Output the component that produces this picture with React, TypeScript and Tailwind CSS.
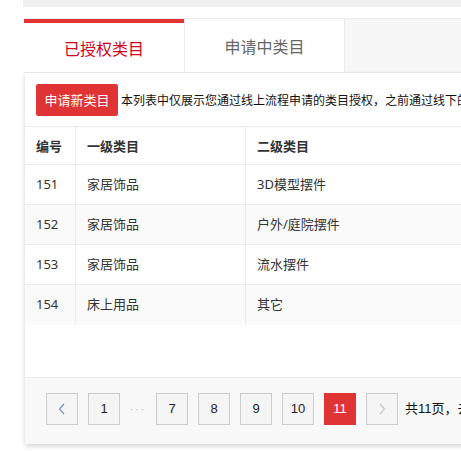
import React from "react";

const rows = [
  { id: "151", a: "家居饰品", b: "3D模型摆件", alt: false },
  { id: "152", a: "家居饰品", b: "户外/庭院摆件", alt: true },
  { id: "153", a: "家居饰品", b: "流水摆件", alt: false },
  { id: "154", a: "床上用品", b: "其它", alt: true },
];

function Chevron({ dir, color }: { dir: "left" | "right"; color: string }) {
  return (
    <svg width="8" height="12" viewBox="0 0 8 12" fill="none">
      {dir === "left" ? (
        <polyline points="6,1 1.5,6 6,11" stroke={color} strokeWidth="1.2" fill="none" />
      ) : (
        <polyline points="2,1 6.5,6 2,11" stroke={color} strokeWidth="1.2" fill="none" />
      )}
    </svg>
  );
}

export default function App() {
  const font = { fontFamily: '"Noto Sans", "Noto Sans CJK SC", sans-serif' };
  return (
    <div
      className="w-[461px] h-[451px] bg-white overflow-hidden relative"
      style={{ fontFamily: '"Noto Sans CJK SC", sans-serif' }}
    >
      <div className="ml-[23px] h-[7px] bg-[#f0f0f0]" />
      <div className="mt-[11px] ml-[24px] w-[600px] flex h-[55px] border-t border-[#ebebeb] border-b bg-[#f7f7f7]">
        <div className="w-[160px] bg-white flex flex-col">
          <div className="h-[4px] bg-[#e03333]" />
          <div className="flex-1 flex items-center justify-center text-[16px] text-[#d0021b]">
            已授权类目
          </div>
        </div>
        <div className="w-[161px] bg-white border-l border-r border-[#ebebeb] flex items-center justify-center text-[16px] text-[#666]">
          申请中类目
        </div>
      </div>
      <div className="ml-[25px] w-[600px] h-[371px] bg-white shadow-[0_2px_5px_rgba(0,0,0,0.18)] flex flex-col">
        <div className="flex items-center pl-[11px] pt-[11px] pb-[10px] border-b border-[#ebebeb] whitespace-nowrap">
          <div className="h-[32px] w-[82px] bg-[#e03333] rounded-[2px] text-white text-[13px] flex items-center justify-center">
            申请新类目
          </div>
          <div className="ml-[3px] text-[12px] text-[#111]">
            本列表中仅展示您通过线上流程申请的类目授权，之前通过线下的申请记录请联系小二查询
          </div>
        </div>
        <div className="flex flex-col text-[13px] text-[#333]" style={font}>
          <div className="flex h-[38px] border-b border-[#ebebeb] font-bold text-[#333]" style={{ fontFamily: '"Noto Sans CJK SC", sans-serif' }}>
            <div className="w-[51px] pl-[11px] flex items-center border-r border-[#ebebeb]">编号</div>
            <div className="w-[170px] pl-[11px] flex items-center border-r border-[#ebebeb]">一级类目</div>
            <div className="flex-1 pl-[11px] flex items-center">二级类目</div>
          </div>
          {rows.map((r, i) => (
            <div
              key={r.id}
              className={`flex h-[40px] ${i < rows.length - 1 ? "border-b border-[#ebebeb]" : ""} ${r.alt ? "bg-[#fafafa]" : "bg-white"}`}
            >
              <div className="w-[51px] pl-[11px] flex items-center border-r border-[#ebebeb]">{r.id}</div>
              <div className="w-[170px] pl-[11px] flex items-center border-r border-[#ebebeb]">{r.a}</div>
              <div className="flex-1 pl-[11px] flex items-center">{r.b}</div>
            </div>
          ))}
        </div>
        <div className="flex-1" />
        <div
          className="h-[67px] bg-[#f8f8f8] border-t border-[#ebebeb] flex items-start pt-[15px] pl-[21px] gap-[10px] whitespace-nowrap text-[13px] text-[#222]"
          style={{ fontFamily: '"Liberation Sans", "Noto Sans CJK SC", sans-serif' }}
        >
          <div className="w-[32px] h-[32px] border border-[#cccccc] bg-[#f5f5f5] flex items-center justify-center">
            <Chevron dir="left" color="#7c93ab" />
          </div>
          <div className="w-[32px] h-[32px] border border-[#cccccc] bg-[#f5f5f5] flex items-center justify-center">1</div>
          <div className="w-[16px] h-[32px] flex items-center justify-center text-[#aaa] text-[10px] tracking-[2px]">···</div>
          <div className="w-[32px] h-[32px] border border-[#cccccc] bg-[#f5f5f5] flex items-center justify-center">7</div>
          <div className="w-[32px] h-[32px] border border-[#cccccc] bg-[#f5f5f5] flex items-center justify-center">8</div>
          <div className="w-[32px] h-[32px] border border-[#cccccc] bg-[#f5f5f5] flex items-center justify-center">9</div>
          <div className="w-[32px] h-[32px] border border-[#cccccc] bg-[#f5f5f5] flex items-center justify-center">10</div>
          <div className="w-[32px] h-[32px] bg-[#e03333] text-white flex items-center justify-center">11</div>
          <div className="w-[32px] h-[32px] border border-[#cccccc] bg-[#f5f5f5] flex items-center justify-center">
            <Chevron dir="right" color="#c8c8c8" />
          </div>
          <div className="h-[32px] flex items-center -ml-[3px] text-[13px] text-[#111]">共11页，去第</div>
        </div>
      </div>
    </div>
  );
}
